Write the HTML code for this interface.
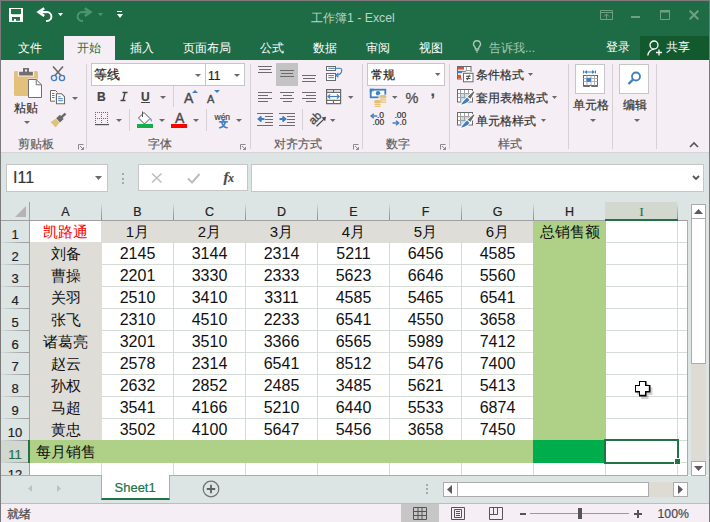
<!DOCTYPE html><html><head><meta charset="utf-8"><style>
*{margin:0;padding:0;box-sizing:border-box}
html,body{width:710px;height:522px;overflow:hidden;background:#fff}
body{position:relative;font-family:"Liberation Sans",sans-serif;color:#222}
.abs{position:absolute}
.t{position:absolute;white-space:nowrap;line-height:1;-webkit-text-stroke:0.2px currentColor}
.n{-webkit-text-stroke:0}
svg{position:absolute;overflow:visible}
</style></head><body>

<div class="abs" style="left:0px;top:0px;width:710px;height:60px;background:#1E6C46;"></div>
<div class="abs" style="left:640px;top:36px;width:70px;height:24px;background:#125A2E;"></div>
<div class="abs" style="left:64px;top:36px;width:51px;height:24px;background:#F5EEF5;"></div>
<div class="t" style="left:311px;top:12px;font-size:12.3px;color:#B9D5C4;-webkit-text-stroke:0;">工作簿1 - Excel</div>
<svg style="left:9px;top:8px" width="14" height="14" viewBox="0 0 14 14"><path d="M0 0H14V14H0Z" fill="#FFFFFF"/><path d="M2 1H12V5.2L11.2 6.2H2.8L2 5.2Z" fill="#217346"/><path d="M3 9H11V12.8H7V11H5V12.8H3Z" fill="#217346"/></svg>
<svg style="left:36px;top:6px" width="20" height="17" viewBox="0 0 20 17"><path d="M11 6.1A4.4 4.4 0 0 1 11 14.9H10" fill="none" stroke="#FFFFFF" stroke-width="2"/><path d="M3.5 6.1H11" stroke="#FFFFFF" stroke-width="2.2"/><path d="M8.2 2.2L2.6 6.1L8.2 10" fill="none" stroke="#FFFFFF" stroke-width="2.6"/></svg>
<svg style="left:58.0px;top:12.8px" width="5" height="3.2" viewBox="0 0 5 3.2"><path d="M0 0H5L2.5 3.2Z" fill="#FFFFFF"/></svg>
<svg style="left:76px;top:6px" width="20" height="17" viewBox="0 0 20 17"><path d="M6 6.1A4.4 4.4 0 0 0 6 14.9H7" fill="none" stroke="#4F9470" stroke-width="2"/><path d="M13.5 6.1H6" stroke="#4F9470" stroke-width="2.2"/><path d="M8.8 2.2L14.4 6.1L8.8 10" fill="none" stroke="#4F9470" stroke-width="2.6"/></svg>
<svg style="left:98.0px;top:12.8px" width="5" height="3.2" viewBox="0 0 5 3.2"><path d="M0 0H5L2.5 3.2Z" fill="#4F9470"/></svg>
<div class="abs" style="left:117px;top:11px;width:5px;height:1px;background:#FFFFFF;"></div>
<svg style="left:116.5px;top:14px" width="6" height="4" viewBox="0 0 6 4"><path d="M0 0H6L3.0 4Z" fill="#FFFFFF"/></svg>
<svg style="left:600px;top:10px" width="13" height="10" viewBox="0 0 13 10"><path d="M0.5 0.5H12.5V9.5H0.5Z M0.5 2.5H12.5" fill="none" stroke="#6FA084" stroke-width="1"/><path d="M4 6.5L6.5 4L9 6.5M6.5 4V9" fill="none" stroke="#6FA084" stroke-width="1"/></svg>
<div class="abs" style="left:631px;top:16px;width:9px;height:2px;background:#6FA084;"></div>
<svg style="left:660px;top:10px" width="10" height="10" viewBox="0 0 10 10"><path d="M0.5 0.5H9.5V9.5H0.5Z" fill="none" stroke="#6FA084" stroke-width="1"/><path d="M0 1.5H10" stroke="#6FA084" stroke-width="2"/></svg>
<svg style="left:689px;top:10px" width="10" height="10" viewBox="0 0 10 10"><path d="M0.7 0.7L9.3 9.3M9.3 0.7L0.7 9.3" stroke="#6FA084" stroke-width="2"/></svg>
<div class="t" style="left:18px;top:41.5px;font-size:12px;color:#fff;-webkit-text-stroke:0;">文件</div>
<div class="t" style="left:77px;top:41.5px;font-size:12px;color:#217346;-webkit-text-stroke:0;">开始</div>
<div class="t" style="left:130px;top:41.5px;font-size:12px;color:#fff;-webkit-text-stroke:0;">插入</div>
<div class="t" style="left:183px;top:41.5px;font-size:12px;color:#fff;-webkit-text-stroke:0;">页面布局</div>
<div class="t" style="left:260px;top:41.5px;font-size:12px;color:#fff;-webkit-text-stroke:0;">公式</div>
<div class="t" style="left:313px;top:41.5px;font-size:12px;color:#fff;-webkit-text-stroke:0;">数据</div>
<div class="t" style="left:366px;top:41.5px;font-size:12px;color:#fff;-webkit-text-stroke:0;">审阅</div>
<div class="t" style="left:419px;top:41.5px;font-size:12px;color:#fff;-webkit-text-stroke:0;">视图</div>
<svg style="left:473px;top:40px" width="8" height="13" viewBox="0 0 8 13"><path d="M4 0.8A3.3 3.3 0 0 0 1.6 6.6C2.3 7.4 2.5 8 2.5 9H5.5C5.5 8 5.7 7.4 6.4 6.6A3.3 3.3 0 0 0 4 0.8Z" fill="none" stroke="#A6C9B3" stroke-width="1.4"/><path d="M2.6 10.5H5.4M3 12H5" stroke="#A6C9B3" stroke-width="1.2"/></svg>
<div class="t" style="left:489px;top:41.5px;font-size:12px;color:#A6C9B3;-webkit-text-stroke:0;">告诉我...</div>
<div class="t" style="left:606px;top:41px;font-size:12px;color:#fff;-webkit-text-stroke:0;">登录</div>
<svg style="left:647px;top:40px" width="15" height="16" viewBox="0 0 15 16"><circle cx="7" cy="5" r="4" fill="none" stroke="#fff" stroke-width="1.3"/><path d="M0.8 15.5C1.5 11.5 4 9.3 7 9.3" fill="none" stroke="#fff" stroke-width="1.3"/><path d="M9 12.5H15M12 9.5V15.5" stroke="#fff" stroke-width="1.3"/></svg>
<div class="t" style="left:666px;top:41px;font-size:12px;color:#fff;-webkit-text-stroke:0;">共享</div>
<div class="abs" style="left:0px;top:60px;width:710px;height:93px;background:#F5EEF5;"></div>
<div class="abs" style="left:0px;top:152px;width:710px;height:1px;background:#D5D5D5;"></div>
<div class="t" style="left:18px;top:138.5px;font-size:11.5px;color:#5F5F5F;">剪贴板</div>
<div class="t" style="left:148px;top:138.5px;font-size:11.5px;color:#5F5F5F;">字体</div>
<div class="t" style="left:274px;top:138.5px;font-size:11.5px;color:#5F5F5F;">对齐方式</div>
<div class="t" style="left:386px;top:138.5px;font-size:11.5px;color:#5F5F5F;">数字</div>
<div class="t" style="left:498px;top:138.5px;font-size:11.5px;color:#5F5F5F;">样式</div>
<div class="abs" style="left:86px;top:64px;width:1px;height:85px;background:#D4D0D4;"></div>
<div class="abs" style="left:250px;top:64px;width:1px;height:85px;background:#D4D0D4;"></div>
<div class="abs" style="left:362px;top:64px;width:1px;height:85px;background:#D4D0D4;"></div>
<div class="abs" style="left:449px;top:64px;width:1px;height:85px;background:#D4D0D4;"></div>
<div class="abs" style="left:568px;top:64px;width:1px;height:85px;background:#D4D0D4;"></div>
<div class="abs" style="left:612px;top:64px;width:1px;height:85px;background:#D4D0D4;"></div>
<div class="abs" style="left:656px;top:64px;width:1px;height:85px;background:#D4D0D4;"></div>
<svg style="left:78px;top:144px" width="6" height="6" viewBox="0 0 6 6"><path d="M0.5 5.5V0.5H5.5" fill="none" stroke="#8A8A8A" stroke-width="1"/><path d="M2 2L5.5 5.5M5.5 3V5.5H3" fill="none" stroke="#8A8A8A" stroke-width="1"/></svg>
<svg style="left:240px;top:144px" width="6" height="6" viewBox="0 0 6 6"><path d="M0.5 5.5V0.5H5.5" fill="none" stroke="#8A8A8A" stroke-width="1"/><path d="M2 2L5.5 5.5M5.5 3V5.5H3" fill="none" stroke="#8A8A8A" stroke-width="1"/></svg>
<svg style="left:353px;top:144px" width="6" height="6" viewBox="0 0 6 6"><path d="M0.5 5.5V0.5H5.5" fill="none" stroke="#8A8A8A" stroke-width="1"/><path d="M2 2L5.5 5.5M5.5 3V5.5H3" fill="none" stroke="#8A8A8A" stroke-width="1"/></svg>
<svg style="left:440px;top:144px" width="6" height="6" viewBox="0 0 6 6"><path d="M0.5 5.5V0.5H5.5" fill="none" stroke="#8A8A8A" stroke-width="1"/><path d="M2 2L5.5 5.5M5.5 3V5.5H3" fill="none" stroke="#8A8A8A" stroke-width="1"/></svg>
<svg style="left:689px;top:142px" width="10" height="6" viewBox="0 0 10 6"><path d="M1 5L5 1L9 5" fill="none" stroke="#555" stroke-width="1.6"/></svg>
<svg style="left:14px;top:68px" width="28" height="30" viewBox="0 0 28 30"><rect x="0" y="3" width="24" height="25" rx="1.5" fill="#E4C17A"/><path d="M4.5 8V3.2H19.5V8Z" fill="#707070" stroke="#F5EEF5" stroke-width="1.2"/><rect x="9" y="0" width="6" height="4.5" fill="#707070"/><rect x="11" y="1.5" width="2" height="2" fill="#F5EEF5"/><path d="M14 10.5H22.5L28 16V30H14Z" fill="#F5EEF5"/><path d="M14.5 11.5H22.2L27.5 16.8V29.5H14.5Z" fill="#fff" stroke="#707070" stroke-width="1"/><path d="M22.2 11.5V16.8H27.5" fill="none" stroke="#707070" stroke-width="1"/></svg>
<div class="t" style="left:13.5px;top:102px;font-size:12px;color:#333;">粘贴</div>
<svg style="left:24.0px;top:121px" width="6" height="3" viewBox="0 0 6 3"><path d="M0 0H6L3.0 3Z" fill="#6A6A6A"/></svg>
<svg style="left:50px;top:66px" width="16" height="16" viewBox="0 0 16 16"><path d="M3 0.5L11 9.5M13 0.5L5 9.5" stroke="#6A6A6A" stroke-width="1.6"/><circle cx="4" cy="12" r="2.6" fill="none" stroke="#3F7FC1" stroke-width="1.4"/><circle cx="12" cy="12" r="2.6" fill="none" stroke="#3F7FC1" stroke-width="1.4"/></svg>
<svg style="left:49px;top:89px" width="18" height="17" viewBox="0 0 18 17"><path d="M1.5 1.5H6.5L8.5 3.5V12.2H1.5Z" fill="#fff" stroke="#6A6A6A" stroke-width="1"/><path d="M3 4.5H5.5M3 6.5H5.5M3 8.5H5.5" stroke="#3F7FC1" stroke-width="1"/><path d="M6 3.5H13L16.5 7V15.8H6Z" fill="#F5EEF5"/><path d="M7.5 4.7H12.5L15.5 7.7V14.7H7.5Z" fill="#fff" stroke="#6A6A6A" stroke-width="1.1"/><path d="M9.2 7.8H11.5M9.2 9.7H13.8M9.2 11.7H13.8" stroke="#3F7FC1" stroke-width="1"/></svg>
<svg style="left:71.5px;top:96.5px" width="6" height="3" viewBox="0 0 6 3"><path d="M0 0H6L3.0 3Z" fill="#6A6A6A"/></svg>
<svg style="left:46px;top:104px" width="24" height="26" viewBox="0 0 24 26"><g transform="translate(13.2,15.3) rotate(-42) scale(0.78)"><rect x="3.5" y="-1.6" width="7.5" height="3.2" rx="0.6" fill="#6A6A6A"/><rect x="-2" y="-3.6" width="6.5" height="7.2" fill="#6A6A6A"/><path d="M-2.8 -3.6L-10.5 -4.8V4.8L-2.8 3.6Z" fill="#E5C272"/></g></svg>
<div class="abs" style="left:91px;top:63px;width:115px;height:23px;background:#fff;border:1px solid #C6C6C6;"></div>
<div class="abs" style="left:205px;top:63px;width:40px;height:23px;background:#fff;border:1px solid #C6C6C6;"></div>
<div class="t" style="left:93.5px;top:68.5px;font-size:12.5px;color:#222;">等线</div>
<svg style="left:194.5px;top:74px" width="6" height="3" viewBox="0 0 6 3"><path d="M0 0H6L3.0 3Z" fill="#6A6A6A"/></svg>
<div class="t" style="left:208px;top:69.5px;font-size:12px;color:#222;">11</div>
<svg style="left:234.0px;top:74px" width="6" height="3" viewBox="0 0 6 3"><path d="M0 0H6L3.0 3Z" fill="#6A6A6A"/></svg>
<div class="t" style="left:97px;top:91px;font-size:12px;color:#444;font-weight:bold;">B</div>
<svg style="left:120px;top:92px" width="8" height="9" viewBox="0 0 8 9"><path d="M2.5 0.5H7.5M0.5 8.5H5.5M5 0.5L3 8.5" fill="none" stroke="#444" stroke-width="1.4"/></svg>
<div class="t" style="left:141px;top:91px;font-size:12px;color:#444;font-weight:bold;">U</div>
<div class="abs" style="left:141px;top:102px;width:9px;height:1px;background:#444;"></div>
<svg style="left:159.5px;top:96px" width="6" height="3" viewBox="0 0 6 3"><path d="M0 0H6L3.0 3Z" fill="#6A6A6A"/></svg>
<div class="abs" style="left:173px;top:86px;width:1px;height:21px;background:#D4D0D4;"></div>
<div class="t" style="left:184px;top:91.3px;font-size:14px;color:#4A4A4A;-webkit-text-stroke:0.4px #4A4A4A;">A</div>
<svg style="left:192px;top:90px" width="6" height="3" viewBox="0 0 6 3"><path d="M0 3H6L3 0Z" fill="#3F7FC1"/></svg>
<div class="t" style="left:207px;top:94px;font-size:11px;color:#4A4A4A;-webkit-text-stroke:0.4px #4A4A4A;">A</div>
<svg style="left:214px;top:90px" width="6" height="3" viewBox="0 0 6 3"><path d="M0 0H6L3 3Z" fill="#3F7FC1"/></svg>
<svg style="left:95px;top:112px" width="14" height="14" viewBox="0 0 14 14"><rect x="0" y="0" width="1" height="1" fill="#6A6A6A"/><rect x="0" y="2" width="1" height="1" fill="#6A6A6A"/><rect x="0" y="4" width="1" height="1" fill="#6A6A6A"/><rect x="0" y="6" width="1" height="1" fill="#6A6A6A"/><rect x="0" y="8" width="1" height="1" fill="#6A6A6A"/><rect x="0" y="10" width="1" height="1" fill="#6A6A6A"/><rect x="2" y="0" width="1" height="1" fill="#6A6A6A"/><rect x="2" y="6" width="1" height="1" fill="#6A6A6A"/><rect x="4" y="0" width="1" height="1" fill="#6A6A6A"/><rect x="4" y="6" width="1" height="1" fill="#6A6A6A"/><rect x="6" y="0" width="1" height="1" fill="#6A6A6A"/><rect x="6" y="2" width="1" height="1" fill="#6A6A6A"/><rect x="6" y="4" width="1" height="1" fill="#6A6A6A"/><rect x="6" y="6" width="1" height="1" fill="#6A6A6A"/><rect x="6" y="8" width="1" height="1" fill="#6A6A6A"/><rect x="6" y="10" width="1" height="1" fill="#6A6A6A"/><rect x="8" y="0" width="1" height="1" fill="#6A6A6A"/><rect x="8" y="6" width="1" height="1" fill="#6A6A6A"/><rect x="10" y="0" width="1" height="1" fill="#6A6A6A"/><rect x="10" y="6" width="1" height="1" fill="#6A6A6A"/><rect x="12" y="0" width="1" height="1" fill="#6A6A6A"/><rect x="12" y="2" width="1" height="1" fill="#6A6A6A"/><rect x="12" y="4" width="1" height="1" fill="#6A6A6A"/><rect x="12" y="6" width="1" height="1" fill="#6A6A6A"/><rect x="12" y="8" width="1" height="1" fill="#6A6A6A"/><rect x="12" y="10" width="1" height="1" fill="#6A6A6A"/><rect x="0" y="12" width="14" height="1.2" fill="#555"/></svg>
<svg style="left:115.5px;top:119px" width="6" height="3" viewBox="0 0 6 3"><path d="M0 0H6L3.0 3Z" fill="#6A6A6A"/></svg>
<div class="abs" style="left:129px;top:109px;width:1px;height:22px;background:#D4D0D4;"></div>
<svg style="left:137px;top:111px" width="17" height="17" viewBox="0 0 17 17"><path d="M7 1.5L13 7.5L7.5 13L1.5 7Z" fill="#fff" stroke="#555" stroke-width="1"/><path d="M5.5 0.5V6" stroke="#555" stroke-width="1"/><path d="M13.5 6.5Q15.5 9 14.5 11Q13 9.5 13.5 6.5Z" fill="#3F7FC1"/><rect x="0" y="13" width="16" height="4" fill="#12AE4C"/></svg>
<svg style="left:158.5px;top:119px" width="6" height="3" viewBox="0 0 6 3"><path d="M0 0H6L3.0 3Z" fill="#6A6A6A"/></svg>
<div class="t" style="left:175px;top:111px;font-size:14px;color:#4A4A4A;-webkit-text-stroke:0.4px #4A4A4A;">A</div>
<div class="abs" style="left:171px;top:124px;width:16px;height:4px;background:#FF0000;"></div>
<svg style="left:192.5px;top:119px" width="6" height="3" viewBox="0 0 6 3"><path d="M0 0H6L3.0 3Z" fill="#6A6A6A"/></svg>
<div class="abs" style="left:206px;top:109px;width:1px;height:22px;background:#D4D0D4;"></div>
<div class="t" style="left:214.5px;top:113px;font-size:8.5px;color:#444;">wén</div>
<div class="t" style="left:218.5px;top:120px;font-size:8.5px;color:#3F7FC1;font-weight:bold;">文</div>
<svg style="left:235.5px;top:119px" width="6" height="3" viewBox="0 0 6 3"><path d="M0 0H6L3.0 3Z" fill="#6A6A6A"/></svg>
<div class="abs" style="left:276px;top:63px;width:22px;height:23px;background:#C3C3C3;"></div>
<div class="abs" style="left:258.0px;top:66px;width:14px;height:1px;background:#6E6A6E;"></div>
<div class="abs" style="left:259.0px;top:69px;width:12px;height:1px;background:#6E6A6E;"></div>
<div class="abs" style="left:258.0px;top:72px;width:14px;height:1px;background:#6E6A6E;"></div>
<div class="abs" style="left:280.0px;top:70px;width:14px;height:1px;background:#6E6A6E;"></div>
<div class="abs" style="left:281.0px;top:73px;width:12px;height:1px;background:#6E6A6E;"></div>
<div class="abs" style="left:280.0px;top:76px;width:14px;height:1px;background:#6E6A6E;"></div>
<div class="abs" style="left:302.0px;top:75px;width:14px;height:1px;background:#6E6A6E;"></div>
<div class="abs" style="left:303.0px;top:78px;width:12px;height:1px;background:#6E6A6E;"></div>
<div class="abs" style="left:302.0px;top:81px;width:14px;height:1px;background:#6E6A6E;"></div>
<div class="abs" style="left:258px;top:92px;width:14px;height:1px;background:#6E6A6E;"></div>
<div class="abs" style="left:258px;top:95px;width:10px;height:1px;background:#6E6A6E;"></div>
<div class="abs" style="left:258px;top:98px;width:14px;height:1px;background:#6E6A6E;"></div>
<div class="abs" style="left:258px;top:101px;width:10px;height:1px;background:#6E6A6E;"></div>
<div class="abs" style="left:280.0px;top:92px;width:14px;height:1px;background:#6E6A6E;"></div>
<div class="abs" style="left:282.5px;top:95px;width:9px;height:1px;background:#6E6A6E;"></div>
<div class="abs" style="left:280.0px;top:98px;width:14px;height:1px;background:#6E6A6E;"></div>
<div class="abs" style="left:282.5px;top:101px;width:9px;height:1px;background:#6E6A6E;"></div>
<div class="abs" style="left:302px;top:92px;width:14px;height:1px;background:#6E6A6E;"></div>
<div class="abs" style="left:306px;top:95px;width:10px;height:1px;background:#6E6A6E;"></div>
<div class="abs" style="left:302px;top:98px;width:14px;height:1px;background:#6E6A6E;"></div>
<div class="abs" style="left:306px;top:101px;width:10px;height:1px;background:#6E6A6E;"></div>
<div class="abs" style="left:257px;top:113px;width:16px;height:1px;background:#6E6A6E;"></div>
<div class="abs" style="left:257px;top:125px;width:16px;height:1px;background:#6E6A6E;"></div>
<div class="abs" style="left:265px;top:116px;width:8px;height:1px;background:#6E6A6E;"></div>
<div class="abs" style="left:265px;top:119px;width:8px;height:1px;background:#6E6A6E;"></div>
<div class="abs" style="left:265px;top:122px;width:8px;height:1px;background:#6E6A6E;"></div>
<svg style="left:257px;top:115px" width="8" height="8" viewBox="0 0 8 8"><path d="M7.5 4H2M4.5 1.5L1.5 4L4.5 6.5" fill="none" stroke="#3F7FC1" stroke-width="1.8"/></svg>
<div class="abs" style="left:279px;top:113px;width:16px;height:1px;background:#6E6A6E;"></div>
<div class="abs" style="left:279px;top:125px;width:16px;height:1px;background:#6E6A6E;"></div>
<div class="abs" style="left:287px;top:116px;width:8px;height:1px;background:#6E6A6E;"></div>
<div class="abs" style="left:287px;top:119px;width:8px;height:1px;background:#6E6A6E;"></div>
<div class="abs" style="left:287px;top:122px;width:8px;height:1px;background:#6E6A6E;"></div>
<svg style="left:279px;top:115px" width="8" height="8" viewBox="0 0 8 8"><path d="M0.5 4H6M3.5 1.5L6.5 4L3.5 6.5" fill="none" stroke="#3F7FC1" stroke-width="1.8"/></svg>
<div class="abs" style="left:302px;top:109px;width:1px;height:21px;background:#D4D0D4;"></div>
<svg style="left:305px;top:106px" width="32" height="24" viewBox="0 0 32 24"><text x="0" y="0" transform="translate(8.3,19.2) rotate(-45)" font-family="Liberation Sans" font-size="11.5" fill="#4A4A4A" stroke="#4A4A4A" stroke-width="0.35">ab</text><path d="M11.5 20.2L19.5 12.6" fill="none" stroke="#4A4A4A" stroke-width="1.3"/><path d="M21 10.8L16.6 11.6L20.2 15.2Z" fill="#4A4A4A"/></svg>
<svg style="left:329.75px;top:119px" width="5.5" height="3" viewBox="0 0 5.5 3"><path d="M0 0H5.5L2.75 3Z" fill="#6A6A6A"/></svg>
<svg style="left:326px;top:66px" width="17" height="15" viewBox="0 0 17 15"><rect x="0.5" y="0.5" width="9" height="4" fill="#fff" stroke="#6A6A6A"/><rect x="0.5" y="7.5" width="9" height="7" fill="#fff" stroke="#6A6A6A"/><path d="M2.3 2.3H14M2.3 9.6H8M2.3 11.7H8" stroke="#3F7FC1" stroke-width="1"/><path d="M14 2.3Q16.3 2.6 15.6 5.5Q14.8 8.6 10.5 9.3" fill="none" stroke="#3F7FC1" stroke-width="1.1"/><path d="M12.4 7.2L10 9.3L12.4 11.2" fill="none" stroke="#3F7FC1" stroke-width="1.2"/></svg>
<svg style="left:326px;top:89px" width="16" height="16" viewBox="0 0 16 16"><path d="M0.6 0.6H14.6V14.6H0.6Z M0.6 3.4H14.6 M0.6 11.4H14.6 M7.5 0.6V3.4 M7.5 11.4V14.6" fill="#fff" stroke="#6A6A6A" stroke-width="1.2"/><path d="M2.3 7.5H12.9" stroke="#3F7FC1" stroke-width="1.2"/><path d="M4.3 5.4L2 7.5L4.3 9.6M10.9 5.4L13.2 7.5L10.9 9.6" fill="none" stroke="#3F7FC1" stroke-width="1.2"/></svg>
<svg style="left:347.75px;top:96px" width="5.5" height="3" viewBox="0 0 5.5 3"><path d="M0 0H5.5L2.75 3Z" fill="#6A6A6A"/></svg>
<div class="abs" style="left:367px;top:63px;width:78px;height:23px;background:#fff;border:1px solid #C6C6C6;"></div>
<div class="t" style="left:370.5px;top:68.5px;font-size:12px;color:#222;">常规</div>
<svg style="left:434.75px;top:73px" width="5.5" height="3" viewBox="0 0 5.5 3"><path d="M0 0H5.5L2.75 3Z" fill="#6A6A6A"/></svg>
<svg style="left:369px;top:88px" width="19" height="19" viewBox="0 0 19 19"><rect x="1.7" y="1.7" width="14.6" height="7.6" fill="#fff" stroke="#3F7FC1" stroke-width="1.8"/><path d="M0.8 0.8H4.5V3.5H3.5V2.8H2.8V4.2H0.8Z" fill="#3F7FC1"/><circle cx="9" cy="5.3" r="2.2" fill="#3F7FC1"/><rect x="9.5" y="6.6" width="8.8" height="5.2" fill="#F5EEF5"/><rect x="10.3" y="7" width="7.2" height="3.6" rx="1.8" fill="#E5C272"/><rect x="10.8" y="11.2" width="6.5" height="1.3" rx="0.6" fill="#E5C272"/><rect x="11" y="13.5" width="6.3" height="1.3" rx="0.6" fill="#E5C272"/><rect x="5" y="12" width="7" height="3.4" rx="1.7" fill="#E5C272"/><rect x="5.4" y="16" width="6.4" height="1.3" rx="0.6" fill="#E5C272"/><rect x="5.8" y="17.9" width="6" height="1.2" rx="0.6" fill="#E5C272"/></svg>
<svg style="left:391.75px;top:96px" width="5.5" height="3" viewBox="0 0 5.5 3"><path d="M0 0H5.5L2.75 3Z" fill="#6A6A6A"/></svg>
<div class="t" style="left:405.5px;top:91.3px;font-size:14.5px;color:#505050;font-weight:normal;-webkit-text-stroke:0.3px #505050;">%</div>
<div class="t" style="left:430.5px;top:83px;font-size:16px;color:#4A4A4A;font-weight:bold;">,</div>
<div class="t" style="left:377px;top:110.5px;font-size:8.5px;color:#333;">.0</div>
<div class="t" style="left:372.5px;top:117.8px;font-size:8.5px;color:#333;">.00</div>
<svg style="left:370px;top:113px" width="8" height="6" viewBox="0 0 8 6"><path d="M7.2 3H1.8" stroke="#3F7FC1" stroke-width="1.5"/><path d="M3.8 0.8L1.2 3L3.8 5.2" fill="none" stroke="#3F7FC1" stroke-width="1.5"/></svg>
<div class="t" style="left:394.5px;top:110.5px;font-size:8.5px;color:#333;">.00</div>
<div class="t" style="left:399.5px;top:117.8px;font-size:8.5px;color:#333;">.0</div>
<svg style="left:392px;top:120px" width="8" height="6" viewBox="0 0 8 6"><path d="M0.5 3H6" stroke="#3F7FC1" stroke-width="1.5"/><path d="M4 0.8L6.6 3L4 5.2" fill="none" stroke="#3F7FC1" stroke-width="1.5"/></svg>
<svg style="left:455px;top:64px" width="20" height="20" viewBox="0 0 20 20"><rect x="2.5" y="2.5" width="13.5" height="12.5" fill="#fff" stroke="#6A6A6A"/><path d="M11.4 3V7.2M11.4 6.5H15.5" stroke="#9A9A9A"/><rect x="3" y="3" width="6" height="2.6" fill="#E1502A"/><rect x="3" y="6.8" width="8" height="2.4" fill="#3F7FC1"/><rect x="3" y="10.8" width="3" height="3.7" fill="#E1502A"/><rect x="7" y="7.8" width="12" height="11" fill="#F5EEF5"/><rect x="8.5" y="9.3" width="9.5" height="8.5" fill="#fff" stroke="#6A6A6A"/><path d="M11 12.3H15.5M11 14.6H15.5M14.4 10.8L12.1 16.2" stroke="#444" stroke-width="1"/></svg>
<svg style="left:457px;top:89px" width="17" height="17" viewBox="0 0 17 17"><rect x="0.5" y="0.5" width="15" height="12.5" fill="#fff" stroke="#6A6A6A"/><rect x="4" y="5" width="8" height="8" fill="#C6DDF0"/><path d="M3.5 1V13M7.5 1V13M11.5 1V13M1 4.5H15.5M1 8.5H15.5" stroke="#A0A0A0" stroke-width="1"/><path d="M16.8 2.2L17.5 3L13.5 9.8L10.6 7.8Z" fill="#fff" stroke="#fff" stroke-width="2"/><path d="M10.2 8.6Q8 9.8 4 15.8Q9.5 14.8 12.5 11Z" fill="#fff" stroke="#fff" stroke-width="2"/><path d="M16.8 2.2L17.5 3L13.5 9.8L10.6 7.8Z" fill="#6A6A6A"/><path d="M10.2 8.6Q8 9.8 4 15.8Q9.5 14.8 12.5 11Z" fill="#3F7FC1"/></svg>
<svg style="left:457px;top:112px" width="17" height="17" viewBox="0 0 17 17"><rect x="0.5" y="0.5" width="15" height="12.5" fill="#fff" stroke="#6A6A6A"/><rect x="4" y="5" width="8" height="8" fill="#C6DDF0"/><path d="M3.5 1V13M7.5 1V13M11.5 1V13M1 4.5H15.5M1 8.5H15.5" stroke="#A0A0A0" stroke-width="1"/><path d="M16.8 2.2L17.5 3L13.5 9.8L10.6 7.8Z" fill="#fff" stroke="#fff" stroke-width="2"/><path d="M10.2 8.6Q8 9.8 4 15.8Q9.5 14.8 12.5 11Z" fill="#fff" stroke="#fff" stroke-width="2"/><path d="M16.8 2.2L17.5 3L13.5 9.8L10.6 7.8Z" fill="#6A6A6A"/><path d="M10.2 8.6Q8 9.8 4 15.8Q9.5 14.8 12.5 11Z" fill="#3F7FC1"/></svg>
<div class="t" style="left:476px;top:69px;font-size:12px;color:#333;">条件格式</div>
<svg style="left:528.0px;top:73px" width="5" height="3" viewBox="0 0 5 3"><path d="M0 0H5L2.5 3Z" fill="#6A6A6A"/></svg>
<div class="t" style="left:476px;top:92px;font-size:12px;color:#333;">套用表格格式</div>
<svg style="left:552.0px;top:96px" width="5" height="3" viewBox="0 0 5 3"><path d="M0 0H5L2.5 3Z" fill="#6A6A6A"/></svg>
<div class="t" style="left:476px;top:115px;font-size:12px;color:#333;">单元格样式</div>
<svg style="left:540.5px;top:119px" width="5" height="3" viewBox="0 0 5 3"><path d="M0 0H5L2.5 3Z" fill="#6A6A6A"/></svg>
<div class="abs" style="left:575px;top:64px;width:30px;height:30px;background:#fff;border:1px solid #C6C6C6;"></div>
<div class="abs" style="left:619px;top:64px;width:30px;height:30px;background:#fff;border:1px solid #C6C6C6;"></div>
<svg style="left:583px;top:70px" width="16" height="18" viewBox="0 0 16 18"><path d="M0.5 0.5V3.5M12.5 0.5V3.5M1.5 2H11.5" fill="none" stroke="#3F7FC1" stroke-width="1"/><path d="M4 0L1.5 2L4 4ZM9 0L11.5 2L9 4Z" fill="#3F7FC1"/><rect x="0.5" y="5.5" width="14" height="10" fill="#fff" stroke="#6A6A6A"/><path d="M0.5 8.5H14.5M0.5 11.5H14.5M4 5.5V15.5M8 5.5V15.5M11.5 5.5V15.5" stroke="#B0B0B0" stroke-width="1"/><rect x="3.5" y="7.8" width="4.5" height="4" fill="#3F7FC1"/><path d="M0.5 15.5V16.5H6.5V15.5M8.5 15.5V16.5H14.5V15.5" fill="none" stroke="#6A6A6A" stroke-width="1"/></svg>
<svg style="left:627px;top:71px" width="14" height="14" viewBox="0 0 14 14"><circle cx="9" cy="5.5" r="4" fill="none" stroke="#3F7FC1" stroke-width="1.8"/><path d="M6 8.5L1.5 13" stroke="#3F7FC1" stroke-width="2.4"/></svg>
<div class="t" style="left:573px;top:99px;font-size:12px;color:#333;">单元格</div>
<svg style="left:589.5px;top:119px" width="6" height="3" viewBox="0 0 6 3"><path d="M0 0H6L3.0 3Z" fill="#6A6A6A"/></svg>
<div class="t" style="left:623px;top:99px;font-size:12px;color:#333;">编辑</div>
<svg style="left:633.5px;top:119px" width="6" height="3" viewBox="0 0 6 3"><path d="M0 0H6L3.0 3Z" fill="#6A6A6A"/></svg>
<div class="abs" style="left:0px;top:153px;width:710px;height:49px;background:#DDE4E4;"></div>
<div class="abs" style="left:6px;top:164px;width:102px;height:28px;background:#fff;border:1px solid #C6C6C6;"></div>
<div class="t" style="left:13px;top:170px;font-size:16px;color:#333;">I11</div>
<svg style="left:95.0px;top:175.5px" width="7" height="4" viewBox="0 0 7 4"><path d="M0 0H7L3.5 4Z" fill="#6A6A6A"/></svg>
<div class="abs" style="left:122px;top:173px;width:2px;height:2px;background:#A8A8A8;"></div>
<div class="abs" style="left:122px;top:178px;width:2px;height:2px;background:#A8A8A8;"></div>
<div class="abs" style="left:122px;top:182px;width:2px;height:2px;background:#A8A8A8;"></div>
<div class="abs" style="left:138px;top:164px;width:110px;height:27px;background:#fff;border:1px solid #C6C6C6;"></div>
<svg style="left:151px;top:173px" width="12" height="10" viewBox="0 0 12 10"><path d="M1 0.5L10.5 9.5M10.5 0.5L1 9.5" stroke="#BDBDBD" stroke-width="1.5"/></svg>
<svg style="left:187px;top:173px" width="13" height="11" viewBox="0 0 13 11"><path d="M1 5.5L5 9.5L12.5 1" fill="none" stroke="#BDBDBD" stroke-width="2"/></svg>
<div class="t" style="left:223.5px;top:170px;font-size:15px;color:#4A4A4A;font-family:'Liberation Serif',serif;font-weight:bold;"><i>f</i><i style="font-size:12px;margin-left:-0.5px">x</i></div>
<div class="abs" style="left:251px;top:164px;width:453px;height:28px;background:#fff;border:1px solid #C6C6C6;"></div>
<svg style="left:692px;top:175px" width="8" height="5" viewBox="0 0 8 5"><path d="M1 1L4 4L7 1" fill="none" stroke="#555" stroke-width="1.8"/></svg>
<div class="abs" style="left:0px;top:202px;width:710px;height:273px;background:#DDE4E4;"></div>
<div class="abs" style="left:30px;top:221px;width:658px;height:254px;background:#fff;"></div>
<div class="abs" style="left:101px;top:221px;width:1px;height:254px;background:#D5DCD5;"></div>
<div class="abs" style="left:173px;top:221px;width:1px;height:254px;background:#D5DCD5;"></div>
<div class="abs" style="left:245px;top:221px;width:1px;height:254px;background:#D5DCD5;"></div>
<div class="abs" style="left:317px;top:221px;width:1px;height:254px;background:#D5DCD5;"></div>
<div class="abs" style="left:389px;top:221px;width:1px;height:254px;background:#D5DCD5;"></div>
<div class="abs" style="left:461px;top:221px;width:1px;height:254px;background:#D5DCD5;"></div>
<div class="abs" style="left:533px;top:221px;width:1px;height:254px;background:#D5DCD5;"></div>
<div class="abs" style="left:605px;top:221px;width:1px;height:254px;background:#D5DCD5;"></div>
<div class="abs" style="left:677px;top:221px;width:1px;height:254px;background:#D5DCD5;"></div>
<div class="abs" style="left:30px;top:242px;width:658px;height:1px;background:#D5DCD5;"></div>
<div class="abs" style="left:30px;top:264px;width:658px;height:1px;background:#D5DCD5;"></div>
<div class="abs" style="left:30px;top:286px;width:658px;height:1px;background:#D5DCD5;"></div>
<div class="abs" style="left:30px;top:308px;width:658px;height:1px;background:#D5DCD5;"></div>
<div class="abs" style="left:30px;top:330px;width:658px;height:1px;background:#D5DCD5;"></div>
<div class="abs" style="left:30px;top:352px;width:658px;height:1px;background:#D5DCD5;"></div>
<div class="abs" style="left:30px;top:374px;width:658px;height:1px;background:#D5DCD5;"></div>
<div class="abs" style="left:30px;top:396px;width:658px;height:1px;background:#D5DCD5;"></div>
<div class="abs" style="left:30px;top:418px;width:658px;height:1px;background:#D5DCD5;"></div>
<div class="abs" style="left:30px;top:440px;width:658px;height:1px;background:#D5DCD5;"></div>
<div class="abs" style="left:30px;top:462px;width:658px;height:1px;background:#D5DCD5;"></div>
<div class="abs" style="left:101px;top:221px;width:432px;height:22px;background:#DEDDD7;"></div>
<div class="abs" style="left:30px;top:242px;width:72px;height:198px;background:#DEDDD7;"></div>
<div class="abs" style="left:533px;top:221px;width:73px;height:219px;background:#AED087;"></div>
<div class="abs" style="left:30px;top:440px;width:503px;height:23px;background:#AED087;"></div>
<div class="abs" style="left:533px;top:440px;width:73px;height:23px;background:#00AD4D;"></div>
<div class="abs" style="left:0px;top:220px;width:688px;height:1px;background:#A0A0A0;"></div>
<div class="abs" style="left:29px;top:202px;width:1px;height:273px;background:#A0A0A0;"></div>
<div class="abs" style="left:101px;top:203px;width:1px;height:17px;background:linear-gradient(#DDE4E4,#A8A8A8 60%,#909090);"></div>
<div class="abs" style="left:173px;top:203px;width:1px;height:17px;background:linear-gradient(#DDE4E4,#A8A8A8 60%,#909090);"></div>
<div class="abs" style="left:245px;top:203px;width:1px;height:17px;background:linear-gradient(#DDE4E4,#A8A8A8 60%,#909090);"></div>
<div class="abs" style="left:317px;top:203px;width:1px;height:17px;background:linear-gradient(#DDE4E4,#A8A8A8 60%,#909090);"></div>
<div class="abs" style="left:389px;top:203px;width:1px;height:17px;background:linear-gradient(#DDE4E4,#A8A8A8 60%,#909090);"></div>
<div class="abs" style="left:461px;top:203px;width:1px;height:17px;background:linear-gradient(#DDE4E4,#A8A8A8 60%,#909090);"></div>
<div class="abs" style="left:533px;top:203px;width:1px;height:17px;background:linear-gradient(#DDE4E4,#A8A8A8 60%,#909090);"></div>
<div class="abs" style="left:605px;top:203px;width:1px;height:17px;background:linear-gradient(#DDE4E4,#A8A8A8 60%,#909090);"></div>
<div class="abs" style="left:677px;top:203px;width:1px;height:17px;background:linear-gradient(#DDE4E4,#A8A8A8 60%,#909090);"></div>
<div class="abs" style="left:605px;top:202px;width:72px;height:17px;background:#D2D7D0;"></div>
<div class="abs" style="left:605px;top:219px;width:73px;height:2px;background:#217346;"></div>
<div class="abs" style="left:1px;top:242px;width:28px;height:1px;background:linear-gradient(90deg,#D4DADA,#A8A8A8 70%,#9A9A9A);"></div>
<div class="abs" style="left:1px;top:264px;width:28px;height:1px;background:linear-gradient(90deg,#D4DADA,#A8A8A8 70%,#9A9A9A);"></div>
<div class="abs" style="left:1px;top:286px;width:28px;height:1px;background:linear-gradient(90deg,#D4DADA,#A8A8A8 70%,#9A9A9A);"></div>
<div class="abs" style="left:1px;top:308px;width:28px;height:1px;background:linear-gradient(90deg,#D4DADA,#A8A8A8 70%,#9A9A9A);"></div>
<div class="abs" style="left:1px;top:330px;width:28px;height:1px;background:linear-gradient(90deg,#D4DADA,#A8A8A8 70%,#9A9A9A);"></div>
<div class="abs" style="left:1px;top:352px;width:28px;height:1px;background:linear-gradient(90deg,#D4DADA,#A8A8A8 70%,#9A9A9A);"></div>
<div class="abs" style="left:1px;top:374px;width:28px;height:1px;background:linear-gradient(90deg,#D4DADA,#A8A8A8 70%,#9A9A9A);"></div>
<div class="abs" style="left:1px;top:396px;width:28px;height:1px;background:linear-gradient(90deg,#D4DADA,#A8A8A8 70%,#9A9A9A);"></div>
<div class="abs" style="left:1px;top:418px;width:28px;height:1px;background:linear-gradient(90deg,#D4DADA,#A8A8A8 70%,#9A9A9A);"></div>
<div class="abs" style="left:1px;top:440px;width:28px;height:1px;background:linear-gradient(90deg,#D4DADA,#A8A8A8 70%,#9A9A9A);"></div>
<div class="abs" style="left:1px;top:462px;width:28px;height:1px;background:linear-gradient(90deg,#D4DADA,#A8A8A8 70%,#9A9A9A);"></div>
<div class="abs" style="left:1px;top:441px;width:27px;height:21px;background:#D2D7D0;"></div>
<div class="abs" style="left:28px;top:440px;width:2px;height:23px;background:#217346;"></div>
<div class="t" style="left:30px;top:206px;width:71px;text-align:center;font-size:12.5px;color:#222">A</div>
<div class="t" style="left:102px;top:206px;width:71px;text-align:center;font-size:12.5px;color:#222">B</div>
<div class="t" style="left:174px;top:206px;width:71px;text-align:center;font-size:12.5px;color:#222">C</div>
<div class="t" style="left:246px;top:206px;width:71px;text-align:center;font-size:12.5px;color:#222">D</div>
<div class="t" style="left:318px;top:206px;width:71px;text-align:center;font-size:12.5px;color:#222">E</div>
<div class="t" style="left:390px;top:206px;width:71px;text-align:center;font-size:12.5px;color:#222">F</div>
<div class="t" style="left:462px;top:206px;width:71px;text-align:center;font-size:12.5px;color:#222">G</div>
<div class="t" style="left:534px;top:206px;width:71px;text-align:center;font-size:12.5px;color:#222">H</div>
<div class="t" style="left:606px;top:206px;width:71px;text-align:center;font-size:12.5px;font-family:'Liberation Serif',serif;color:#217346">I</div>
<svg style="left:15px;top:206px" width="11" height="11" viewBox="0 0 11 11"><path d="M11 0V11H0Z" fill="#B4B4B4"/></svg>
<div class="abs" style="left:1px;top:221px;width:28px;height:22px;overflow:hidden"><div class="t" style="left:0;top:7px;width:28px;text-align:center;font-size:13px;color:#222">1</div></div>
<div class="abs" style="left:1px;top:243px;width:28px;height:22px;overflow:hidden"><div class="t" style="left:0;top:7px;width:28px;text-align:center;font-size:13px;color:#222">2</div></div>
<div class="abs" style="left:1px;top:265px;width:28px;height:22px;overflow:hidden"><div class="t" style="left:0;top:7px;width:28px;text-align:center;font-size:13px;color:#222">3</div></div>
<div class="abs" style="left:1px;top:287px;width:28px;height:22px;overflow:hidden"><div class="t" style="left:0;top:7px;width:28px;text-align:center;font-size:13px;color:#222">4</div></div>
<div class="abs" style="left:1px;top:309px;width:28px;height:22px;overflow:hidden"><div class="t" style="left:0;top:7px;width:28px;text-align:center;font-size:13px;color:#222">5</div></div>
<div class="abs" style="left:1px;top:331px;width:28px;height:22px;overflow:hidden"><div class="t" style="left:0;top:7px;width:28px;text-align:center;font-size:13px;color:#222">6</div></div>
<div class="abs" style="left:1px;top:353px;width:28px;height:22px;overflow:hidden"><div class="t" style="left:0;top:7px;width:28px;text-align:center;font-size:13px;color:#222">7</div></div>
<div class="abs" style="left:1px;top:375px;width:28px;height:22px;overflow:hidden"><div class="t" style="left:0;top:7px;width:28px;text-align:center;font-size:13px;color:#222">8</div></div>
<div class="abs" style="left:1px;top:397px;width:28px;height:22px;overflow:hidden"><div class="t" style="left:0;top:7px;width:28px;text-align:center;font-size:13px;color:#222">9</div></div>
<div class="abs" style="left:1px;top:419px;width:28px;height:22px;overflow:hidden"><div class="t" style="left:0;top:7px;width:28px;text-align:center;font-size:13px;color:#222">10</div></div>
<div class="abs" style="left:1px;top:441px;width:28px;height:22px;overflow:hidden"><div class="t" style="left:0;top:7px;width:28px;text-align:center;font-size:13px;color:#217346">11</div></div>
<div class="abs" style="left:1px;top:463px;width:28px;height:12px;overflow:hidden"><div class="t" style="left:0;top:5px;width:28px;text-align:center;font-size:13px;color:#222">12</div></div>
<div class="abs" style="left:687px;top:220px;width:1px;height:256px;background:#ABABAB;"></div>
<div class="abs" style="left:0px;top:475px;width:688px;height:1px;background:#ABABAB;"></div>
<div class="t n" style="left:30px;top:224px;width:71px;text-align:center;font-size:15px;color:#FF0000">凯路通</div>
<div class="t n" style="left:102px;top:224px;width:71px;text-align:center;font-size:15px;color:#111">1月</div>
<div class="t n" style="left:174px;top:224px;width:71px;text-align:center;font-size:15px;color:#111">2月</div>
<div class="t n" style="left:246px;top:224px;width:71px;text-align:center;font-size:15px;color:#111">3月</div>
<div class="t n" style="left:318px;top:224px;width:71px;text-align:center;font-size:15px;color:#111">4月</div>
<div class="t n" style="left:390px;top:224px;width:71px;text-align:center;font-size:15px;color:#111">5月</div>
<div class="t n" style="left:462px;top:224px;width:71px;text-align:center;font-size:15px;color:#111">6月</div>
<div class="t n" style="left:534px;top:224px;width:71px;text-align:center;font-size:15px;color:#111">总销售额</div>
<div class="t n" style="left:30px;top:246px;width:71px;text-align:center;font-size:15px;color:#111">刘备</div>
<div class="t n" style="left:102px;top:246.3px;width:71px;text-align:center;font-size:16px;color:#111">2145</div>
<div class="t n" style="left:174px;top:246.3px;width:71px;text-align:center;font-size:16px;color:#111">3144</div>
<div class="t n" style="left:246px;top:246.3px;width:71px;text-align:center;font-size:16px;color:#111">2314</div>
<div class="t n" style="left:318px;top:246.3px;width:71px;text-align:center;font-size:16px;color:#111">5211</div>
<div class="t n" style="left:390px;top:246.3px;width:71px;text-align:center;font-size:16px;color:#111">6456</div>
<div class="t n" style="left:462px;top:246.3px;width:71px;text-align:center;font-size:16px;color:#111">4585</div>
<div class="t n" style="left:30px;top:268px;width:71px;text-align:center;font-size:15px;color:#111">曹操</div>
<div class="t n" style="left:102px;top:268.3px;width:71px;text-align:center;font-size:16px;color:#111">2201</div>
<div class="t n" style="left:174px;top:268.3px;width:71px;text-align:center;font-size:16px;color:#111">3330</div>
<div class="t n" style="left:246px;top:268.3px;width:71px;text-align:center;font-size:16px;color:#111">2333</div>
<div class="t n" style="left:318px;top:268.3px;width:71px;text-align:center;font-size:16px;color:#111">5623</div>
<div class="t n" style="left:390px;top:268.3px;width:71px;text-align:center;font-size:16px;color:#111">6646</div>
<div class="t n" style="left:462px;top:268.3px;width:71px;text-align:center;font-size:16px;color:#111">5560</div>
<div class="t n" style="left:30px;top:290px;width:71px;text-align:center;font-size:15px;color:#111">关羽</div>
<div class="t n" style="left:102px;top:290.3px;width:71px;text-align:center;font-size:16px;color:#111">2510</div>
<div class="t n" style="left:174px;top:290.3px;width:71px;text-align:center;font-size:16px;color:#111">3410</div>
<div class="t n" style="left:246px;top:290.3px;width:71px;text-align:center;font-size:16px;color:#111">3311</div>
<div class="t n" style="left:318px;top:290.3px;width:71px;text-align:center;font-size:16px;color:#111">4585</div>
<div class="t n" style="left:390px;top:290.3px;width:71px;text-align:center;font-size:16px;color:#111">5465</div>
<div class="t n" style="left:462px;top:290.3px;width:71px;text-align:center;font-size:16px;color:#111">6541</div>
<div class="t n" style="left:30px;top:312px;width:71px;text-align:center;font-size:15px;color:#111">张飞</div>
<div class="t n" style="left:102px;top:312.3px;width:71px;text-align:center;font-size:16px;color:#111">2310</div>
<div class="t n" style="left:174px;top:312.3px;width:71px;text-align:center;font-size:16px;color:#111">4510</div>
<div class="t n" style="left:246px;top:312.3px;width:71px;text-align:center;font-size:16px;color:#111">2233</div>
<div class="t n" style="left:318px;top:312.3px;width:71px;text-align:center;font-size:16px;color:#111">6541</div>
<div class="t n" style="left:390px;top:312.3px;width:71px;text-align:center;font-size:16px;color:#111">4550</div>
<div class="t n" style="left:462px;top:312.3px;width:71px;text-align:center;font-size:16px;color:#111">3658</div>
<div class="t n" style="left:30px;top:334px;width:71px;text-align:center;font-size:15px;color:#111">诸葛亮</div>
<div class="t n" style="left:102px;top:334.3px;width:71px;text-align:center;font-size:16px;color:#111">3201</div>
<div class="t n" style="left:174px;top:334.3px;width:71px;text-align:center;font-size:16px;color:#111">3510</div>
<div class="t n" style="left:246px;top:334.3px;width:71px;text-align:center;font-size:16px;color:#111">3366</div>
<div class="t n" style="left:318px;top:334.3px;width:71px;text-align:center;font-size:16px;color:#111">6565</div>
<div class="t n" style="left:390px;top:334.3px;width:71px;text-align:center;font-size:16px;color:#111">5989</div>
<div class="t n" style="left:462px;top:334.3px;width:71px;text-align:center;font-size:16px;color:#111">7412</div>
<div class="t n" style="left:30px;top:356px;width:71px;text-align:center;font-size:15px;color:#111">赵云</div>
<div class="t n" style="left:102px;top:356.3px;width:71px;text-align:center;font-size:16px;color:#111">2578</div>
<div class="t n" style="left:174px;top:356.3px;width:71px;text-align:center;font-size:16px;color:#111">2314</div>
<div class="t n" style="left:246px;top:356.3px;width:71px;text-align:center;font-size:16px;color:#111">6541</div>
<div class="t n" style="left:318px;top:356.3px;width:71px;text-align:center;font-size:16px;color:#111">8512</div>
<div class="t n" style="left:390px;top:356.3px;width:71px;text-align:center;font-size:16px;color:#111">5476</div>
<div class="t n" style="left:462px;top:356.3px;width:71px;text-align:center;font-size:16px;color:#111">7400</div>
<div class="t n" style="left:30px;top:378px;width:71px;text-align:center;font-size:15px;color:#111">孙权</div>
<div class="t n" style="left:102px;top:378.3px;width:71px;text-align:center;font-size:16px;color:#111">2632</div>
<div class="t n" style="left:174px;top:378.3px;width:71px;text-align:center;font-size:16px;color:#111">2852</div>
<div class="t n" style="left:246px;top:378.3px;width:71px;text-align:center;font-size:16px;color:#111">2485</div>
<div class="t n" style="left:318px;top:378.3px;width:71px;text-align:center;font-size:16px;color:#111">3485</div>
<div class="t n" style="left:390px;top:378.3px;width:71px;text-align:center;font-size:16px;color:#111">5621</div>
<div class="t n" style="left:462px;top:378.3px;width:71px;text-align:center;font-size:16px;color:#111">5413</div>
<div class="t n" style="left:30px;top:400px;width:71px;text-align:center;font-size:15px;color:#111">马超</div>
<div class="t n" style="left:102px;top:400.3px;width:71px;text-align:center;font-size:16px;color:#111">3541</div>
<div class="t n" style="left:174px;top:400.3px;width:71px;text-align:center;font-size:16px;color:#111">4166</div>
<div class="t n" style="left:246px;top:400.3px;width:71px;text-align:center;font-size:16px;color:#111">5210</div>
<div class="t n" style="left:318px;top:400.3px;width:71px;text-align:center;font-size:16px;color:#111">6440</div>
<div class="t n" style="left:390px;top:400.3px;width:71px;text-align:center;font-size:16px;color:#111">5533</div>
<div class="t n" style="left:462px;top:400.3px;width:71px;text-align:center;font-size:16px;color:#111">6874</div>
<div class="t n" style="left:30px;top:422px;width:71px;text-align:center;font-size:15px;color:#111">黄忠</div>
<div class="t n" style="left:102px;top:422.3px;width:71px;text-align:center;font-size:16px;color:#111">3502</div>
<div class="t n" style="left:174px;top:422.3px;width:71px;text-align:center;font-size:16px;color:#111">4100</div>
<div class="t n" style="left:246px;top:422.3px;width:71px;text-align:center;font-size:16px;color:#111">5647</div>
<div class="t n" style="left:318px;top:422.3px;width:71px;text-align:center;font-size:16px;color:#111">5456</div>
<div class="t n" style="left:390px;top:422.3px;width:71px;text-align:center;font-size:16px;color:#111">3658</div>
<div class="t n" style="left:462px;top:422.3px;width:71px;text-align:center;font-size:16px;color:#111">7450</div>
<div class="t" style="left:36px;top:444px;font-size:15px;color:#111;-webkit-text-stroke:0;">每月销售</div>
<div class="abs" style="left:604px;top:439px;width:75px;height:25px;border:2px solid #217346"></div>
<div class="abs" style="left:674px;top:458px;width:7px;height:7px;background:#fff;"></div>
<div class="abs" style="left:675px;top:459px;width:5px;height:5px;background:#217346;"></div>
<svg style="left:633px;top:379px" width="22" height="22" viewBox="0 0 22 22"><path d="M6 2H13.5V6H17.5V13.5H13.5V17.5H6V13.5H2V6H6Z" fill="#000" opacity="0.18" transform="translate(2,2.5)"/><path d="M6 2H13.5V6H17.5V13.5H13.5V17.5H6V13.5H2V6H6Z" fill="#000"/><path d="M7 3H12V7H15.8V12H12V15.8H7V12H3V7H7Z" fill="#fff"/></svg>
<div class="abs" style="left:1px;top:476px;width:708px;height:27px;background:#DDE4E4;"></div>
<div class="abs" style="left:688px;top:202px;width:21px;height:273px;background:#DDE4E4;"></div>
<div class="abs" style="left:691px;top:204px;width:15px;height:15px;background:#fff;border:1px solid #ABABAB;"></div>
<svg style="left:694px;top:209px" width="9" height="5" viewBox="0 0 9 5"><path d="M0 5H9L4.5 0Z" fill="#605860"/></svg>
<div class="abs" style="left:691px;top:218px;width:15px;height:146px;background:#fff;border:1px solid #ABABAB;"></div>
<div class="abs" style="left:691px;top:364px;width:15px;height:97px;background:#DDDBD4;"></div>
<div class="abs" style="left:691px;top:461px;width:15px;height:15px;background:#fff;border:1px solid #ABABAB;"></div>
<svg style="left:694px;top:466px" width="9" height="5" viewBox="0 0 9 5"><path d="M0 0H9L4.5 5Z" fill="#605860"/></svg>
<div class="abs" style="left:426px;top:484px;width:2px;height:2px;background:#A8A8A8;"></div>
<div class="abs" style="left:426px;top:488px;width:2px;height:2px;background:#A8A8A8;"></div>
<div class="abs" style="left:426px;top:492px;width:2px;height:2px;background:#A8A8A8;"></div>
<div class="abs" style="left:443px;top:482px;width:15px;height:15px;background:#fff;border:1px solid #ABABAB;"></div>
<svg style="left:447px;top:485px" width="5" height="9" viewBox="0 0 5 9"><path d="M5 0V9L0 4.5Z" fill="#605860"/></svg>
<div class="abs" style="left:457px;top:482px;width:192px;height:15px;background:#fff;border:1px solid #ABABAB;"></div>
<div class="abs" style="left:649px;top:482px;width:24px;height:15px;background:#DDDBD4;"></div>
<div class="abs" style="left:673px;top:482px;width:15px;height:15px;background:#fff;border:1px solid #ABABAB;"></div>
<svg style="left:678px;top:485px" width="5" height="9" viewBox="0 0 5 9"><path d="M0 0V9L5 4.5Z" fill="#605860"/></svg>
<svg style="left:28px;top:485px" width="4" height="7" viewBox="0 0 4 7"><path d="M4 0V7L0 3.5Z" fill="#C0C0C0"/></svg>
<svg style="left:57px;top:485px" width="4" height="7" viewBox="0 0 4 7"><path d="M0 0V7L4 3.5Z" fill="#C0C0C0"/></svg>
<div class="abs" style="left:101px;top:475px;width:69px;height:25px;background:#fff;border-left:1px solid #ABABAB;border-right:1px solid #ABABAB;border-bottom:2px solid #217346"></div>
<div class="t" style="left:114.5px;top:481px;font-size:13px;color:#217346;">Sheet1</div>
<svg style="left:202px;top:480px" width="18" height="18" viewBox="0 0 18 18"><circle cx="9" cy="9" r="7.8" fill="none" stroke="#707070" stroke-width="1.2"/><path d="M9 4.8V13.2M4.8 9H13.2" stroke="#606060" stroke-width="1.8"/></svg>
<div class="abs" style="left:0px;top:503px;width:710px;height:19px;background:#F5EEF5;"></div>
<div class="abs" style="left:0px;top:503px;width:710px;height:1px;background:#BDBDBD;"></div>
<div class="t" style="left:7px;top:508px;font-size:12px;color:#444;">就绪</div>
<div class="abs" style="left:401px;top:504px;width:38px;height:18px;background:#C6C6C6;"></div>
<svg style="left:413px;top:507px" width="14" height="13" viewBox="0 0 14 13"><path d="M0.5 0.5H13.5V12.5H0.5Z M0.5 4.5H13.5M0.5 8.5H13.5M5 0.5V12.5M9 0.5V12.5" fill="none" stroke="#555" stroke-width="1"/></svg>
<svg style="left:451px;top:507px" width="14" height="13" viewBox="0 0 14 13"><path d="M0.5 0.5H13.5V12.5H0.5Z M3.5 2.5H10.5V10.5H3.5Z M5 4.5H9M5 6.5H9M5 8.5H9" fill="none" stroke="#555" stroke-width="1"/></svg>
<svg style="left:489px;top:507px" width="14" height="13" viewBox="0 0 14 13"><path d="M0.5 0.5H13.5V12.5H0.5Z M0.5 7.5H8.5V0.5M4.5 0.5V7.5" fill="none" stroke="#555" stroke-width="1"/></svg>
<div class="abs" style="left:520px;top:513px;width:6px;height:2px;background:#555;"></div>
<div class="abs" style="left:530px;top:513px;width:99px;height:1px;background:#9A9A9A;"></div>
<div class="abs" style="left:578px;top:508px;width:4px;height:11px;background:#555;"></div>
<div class="abs" style="left:634px;top:513px;width:8px;height:1.6px;background:#555;"></div>
<div class="abs" style="left:637.2px;top:509.8px;width:1.6px;height:8px;background:#555;"></div>
<div class="t" style="left:657.5px;top:507.5px;font-size:12.3px;color:#4A4A4A;">100%</div>
<div class="abs" style="left:0px;top:0px;width:710px;height:1px;background:#7E7A7E;"></div>
<div class="abs" style="left:0px;top:0px;width:1px;height:522px;background:#7A7A7A;"></div>
<div class="abs" style="left:709px;top:0px;width:1px;height:522px;background:#7A7A7A;"></div>
</body></html>
